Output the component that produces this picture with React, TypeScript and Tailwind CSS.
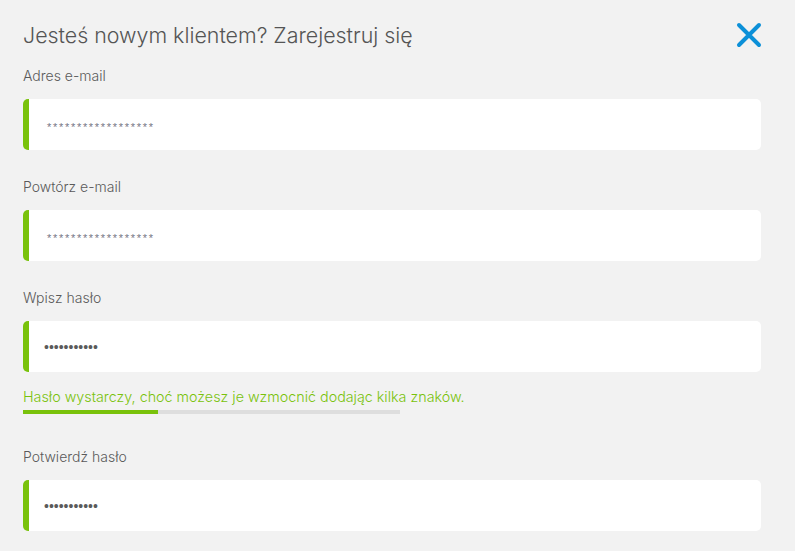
import React from 'react';

const font = { fontFamily: 'Inter, "Open Sans", sans-serif' };

const Field: React.FC<{ label: string; kind: 'mail' | 'pass'; count: number }> = ({ label, kind, count }) => (
  <div>
    <div className="text-[14px] leading-5 text-[#5a5a5a] font-light">{label}</div>
    <div className="mt-[13px] h-[51px] bg-white rounded-[5px] border-l-[6px] border-[#79c20b] flex items-center">
      {kind === 'mail' ? (
        <span
          className="pl-[18px] text-[11px] tracking-[1.7px] text-[#777785] leading-none pt-[6px]"
          style={{ fontFamily: '"Liberation Sans", sans-serif' }}
        >
          {'*'.repeat(count)}
        </span>
      ) : (
        <span
          className="pl-[15px] text-[14px] text-[#5a5a5a] leading-none"
          style={{ fontFamily: '"Liberation Sans", sans-serif' }}
        >
          {'•'.repeat(count)}
        </span>
      )}
    </div>
  </div>
);

export default function App() {
  return (
    <div className="w-[795px] h-[551px] bg-[#f2f2f2] pl-[23px] pr-[34px] pt-[20px] overflow-hidden" style={font}>
      {/* header */}
      <div className="flex items-center justify-between h-[30px]">
        <h1 className="text-[21.4px] font-light text-[#555] leading-[30px]">Jesteś nowym klientem? Zarejestruj się</h1>
        <svg width="26" height="26" viewBox="0 0 26 26" className="-mr-[1px]">
          <path d="M3 3 L23 23 M23 3 L3 23" stroke="#0c90d8" strokeWidth="4" strokeLinecap="round" />
        </svg>
      </div>

      <div className="mt-[16px] flex flex-col gap-[27px]">
        <Field label="Adres e-mail" kind="mail" count={18} />
        <Field label="Powtórz e-mail" kind="mail" count={18} />
        <div>
          <Field label="Wpisz hasło" kind="pass" count={11} />
          <div className="mt-[15px] text-[14.3px] leading-5 font-light text-[#79c20b]">
            Hasło wystarczy, choć możesz je wzmocnić dodając kilka znaków.
          </div>
          <div className="mt-[3px] w-[377px] h-[4px] bg-[#dedede]">
            <div className="w-[135px] h-full bg-[#79c20b]" />
          </div>
        </div>
      </div>

      <div className="mt-[33px]">
        <Field label="Potwierdź hasło" kind="pass" count={11} />
      </div>
    </div>
  );
}
